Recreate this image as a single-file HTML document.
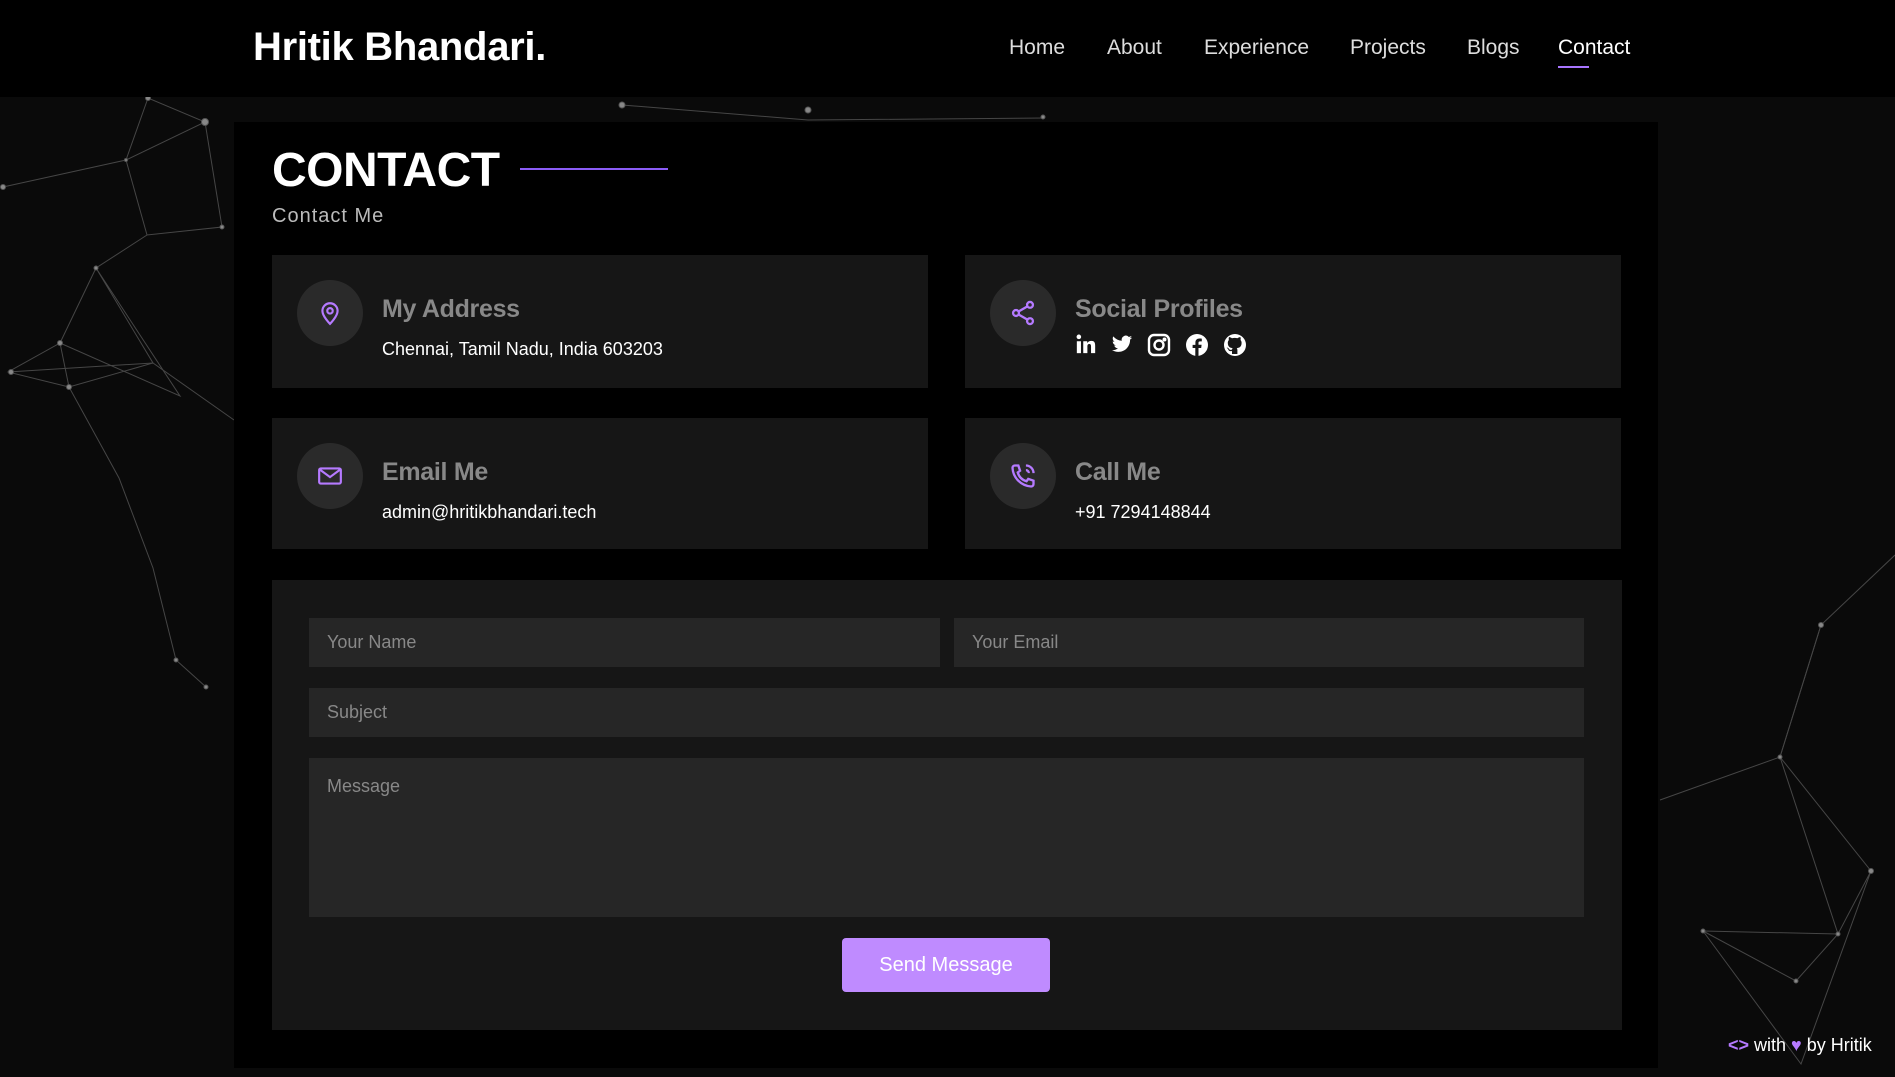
<!DOCTYPE html>
<html><head><meta charset="utf-8"><style>
*{box-sizing:border-box;margin:0;padding:0}
body{width:1895px;height:1077px;background:#0a0a0a;font-family:"Liberation Sans",sans-serif;position:relative;overflow:hidden;color:#fff}
svg.bg{position:absolute;left:0;top:0}
header{position:absolute;left:0;top:0;width:1895px;height:97px;background:#000}
.logo{position:absolute;left:253px;top:25px;font-size:40px;font-weight:bold;letter-spacing:-0.3px}
nav{position:absolute;top:36px;left:1009px;font-size:21px;color:#ddd}
nav span{position:absolute;white-space:nowrap}
.main{position:absolute;left:234px;top:122px;width:1424px;height:946px;background:#000}
h1{position:absolute;left:272px;top:143px;font-size:48px;font-weight:900;letter-spacing:-0.5px}
.hl{position:absolute;left:520px;top:168px;width:148px;height:2px;background:#8b5cf6}
.sub{position:absolute;left:272px;top:205px;font-size:20px;color:#bbb;letter-spacing:1px}
.card{position:absolute;background:#161616;width:656px}
.ic{position:absolute;left:25px;top:25px;width:66px;height:66px;border-radius:50%;background:#2a2a2a;display:flex;align-items:center;justify-content:center}
.t{position:absolute;left:110px;top:40px;font-size:25px;font-weight:bold;color:#888;letter-spacing:-0.3px}
.d{position:absolute;left:110px;top:84px;font-size:18px;color:#fff}
.form{position:absolute;left:272px;top:580px;width:1350px;height:450px;background:#161616}
.in{position:absolute;background:#262626;color:#888;font-size:18px;padding-left:18px;display:flex;align-items:center}
.btn{position:absolute;left:842px;top:938px;width:208px;height:54px;background:#bf8bff;border-radius:4px;color:#fff;font-size:20px;display:flex;align-items:center;justify-content:center}
.foot{position:absolute;left:1728px;top:1035px;font-size:18px;color:#fff}
</style></head><body>
<svg class="bg" width="1895" height="1077" stroke="#555" stroke-width="1" fill="#888">
<g opacity="0.8">
<polyline fill="none" points="3,187 126,160 205,122 148,98 126,160 147,235 222,227 205,122"/>
<polyline fill="none" points="147,235 96,268 60,343 8,372 69,387 153,363 96,268 180,396 60,343 69,387 119,478 153,568 176,660 206,687"/>
<polyline fill="none" points="8,372 153,363 234,420"/>
<polyline fill="none" points="1821,625 1780,757 1871,871 1801,1064 1703,931 1796,981 1838,934 1871,871"/>
<polyline fill="none" points="1895,555 1821,625 1780,757 1660,800"/>
<polyline fill="none" points="1703,931 1838,934 1780,757"/>
<polyline fill="none" points="622,105 808,120 1045,118"/>
</g>
<circle cx="148" cy="98" r="2.5"/><circle cx="205" cy="122" r="3.5"/><circle cx="3" cy="187" r="2.5"/><circle cx="126" cy="160" r="1.5"/><circle cx="222" cy="227" r="2"/><circle cx="96" cy="268" r="2"/><circle cx="60" cy="343" r="2.5"/><circle cx="11" cy="372" r="2.5"/><circle cx="69" cy="387" r="2.5"/><circle cx="206" cy="687" r="2"/><circle cx="176" cy="660" r="2"/>
<circle cx="1821" cy="625" r="2.5"/><circle cx="1780" cy="757" r="2"/><circle cx="1871" cy="871" r="2.5"/><circle cx="1703" cy="931" r="2"/><circle cx="1796" cy="981" r="2"/><circle cx="1838" cy="934" r="2"/><circle cx="622" cy="105" r="3"/><circle cx="808" cy="110" r="3"/><circle cx="1043" cy="117" r="2"/>
</svg>
<header>
<div class="logo">Hritik Bhandari.</div>
<nav>
<span style="left:0">Home</span><span style="left:98px">About</span><span style="left:195px">Experience</span><span style="left:341px">Projects</span><span style="left:458px">Blogs</span><span style="left:549px;color:#fff">Contact</span>
<span style="left:549px;top:30px;width:31px;height:2px;background:#a875ff"></span>
</nav>
</header>
<div class="main"></div>
<h1>CONTACT</h1><div class="hl"></div>
<div class="sub">Contact Me</div>

<div class="card" style="left:272px;top:255px;height:133px">
<div class="ic"><svg width="26" height="26" viewBox="0 0 24 24" fill="none" stroke="#b57aff" stroke-width="2"><path d="M12 22s7-7 7-12a7 7 0 0 0-14 0c0 5 7 12 7 12z"/><circle cx="12" cy="10" r="2.5"/></svg></div>
<div class="t">My Address</div><div class="d">Chennai, Tamil Nadu, India 603203</div></div>

<div class="card" style="left:965px;top:255px;height:133px">
<div class="ic"><svg width="28" height="28" viewBox="0 0 24 24" fill="none" stroke="#b57aff" stroke-width="2"><circle cx="18" cy="5" r="2.5"/><circle cx="6" cy="12" r="2.5"/><circle cx="18" cy="19" r="2.5"/><path d="M8.2 13.3l7.6 4.4M15.8 6.3l-7.6 4.4"/></svg></div>
<div class="t">Social Profiles</div>
<div style="position:absolute;left:110px;top:78px;display:flex;gap:14px">
<svg width="22" height="22" viewBox="0 0 24 24" fill="#fff"><rect x="2" y="9" width="4.5" height="13"/><circle cx="4.2" cy="4.2" r="2.5"/><path d="M9 9h4.3v2c.8-1.4 2.4-2.4 4.6-2.4 3.6 0 4.1 2.6 4.1 5.5V22h-4.5v-7c0-1.6-.1-3-1.9-3s-2.1 1.3-2.1 3v7H9z"/></svg>
<svg width="22" height="22" viewBox="0 0 24 24" fill="#fff"><path d="M23 5c-.8.4-1.700.6-2.6.7.9-.6 1.6-1.4 2-2.5-.9.5-1.900.9-2.900 1.1A4.5 4.5 0 0 0 11.8 8.4 12.8 12.8 0 0 1 2.5 3.7a4.5 4.5 0 0 0 1.4 6c-.7 0-1.4-.2-2-.6 0 2.2 1.6 4 3.6 4.4-.7.2-1.4.2-2 .1.6 1.8 2.2 3.1 4.2 3.1A9 9 0 0 1 1 18.600 12.8 12.8 0 0 0 8 20.6c8.3 0 12.8-6.9 12.8-12.8v-.6c.9-.6 1.6-1.4 2.2-2.2z"/></svg>
<svg width="24" height="24" viewBox="0 0 24 24" fill="none" stroke="#fff" stroke-width="2.4"><rect x="2" y="2" width="20" height="20" rx="5"/><circle cx="12" cy="12" r="4.5"/><circle cx="17.5" cy="6.5" r=".8" fill="#fff"/></svg>
<svg width="24" height="24" viewBox="0 0 24 24"><circle cx="12" cy="12" r="11" fill="#fff"/><path d="M13.5 23v-8h2.7l.4-3.2h-3.1V9.9c0-.9.3-1.5 1.6-1.5h1.7V5.6c-.3 0-1.3-.1-2.4-.1-2.4 0-4 1.5-4 4.1v2.3H7.6V15h2.7v8z" fill="#161616"/></svg>
<svg width="24" height="24" viewBox="0 0 24 24"><circle cx="12" cy="12" r="11" fill="#fff"/><path d="M9 21v-3c-3 .6-3.6-1.3-3.6-1.3-.5-1.2-1.2-1.5-1.2-1.5-1-.6.1-.6.1-.6 1 .1 1.6 1.1 1.6 1.1.9 1.6 2.5 1.2 3.1.9.1-.7.4-1.2.7-1.4-2.4-.3-4.9-1.2-4.9-5.3 0-1.2.4-2.1 1.1-2.900-.1-.3-.5-1.4.1-2.900 0 0 .9-.3 3 1.100a10 10 0 0 1 5.4 0c2.100-1.400 3-1.100 3-1.100.6 1.500.2 2.600.1 2.900.7.8 1.100 1.700 1.100 2.900 0 4.100-2.500 5-4.900 5.300.4.3.7 1 .7 2V21z" fill="#161616"/></svg>
</div></div>

<div class="card" style="left:272px;top:418px;height:131px">
<div class="ic"><svg width="26" height="26" viewBox="0 0 24 24" fill="none" stroke="#b57aff" stroke-width="2"><rect x="2" y="5" width="20" height="14" rx="1.5"/><path d="M2.5 6l9.5 7 9.5-7"/></svg></div>
<div class="t">Email Me</div><div class="d">admin@hritikbhandari.tech</div></div>

<div class="card" style="left:965px;top:418px;height:131px">
<div class="ic"><svg width="28" height="28" viewBox="0 0 24 24" fill="none" stroke="#b57aff" stroke-width="2"><path d="M5 3h3l1.5 4.5-2 1.5a11 11 0 0 0 7.5 7.5l1.5-2L21 16v3a2 2 0 0 1-2 2A17 17 0 0 1 3 5a2 2 0 0 1 2-2z"/><path d="M14.5 3a6.5 6.5 0 0 1 6.5 6.5M14.5 7a2.5 2.5 0 0 1 2.5 2.5"/></svg></div>
<div class="t">Call Me</div><div class="d">+91 7294148844</div></div>

<div class="form"></div>
<div class="in" style="left:309px;top:618px;width:631px;height:49px">Your Name</div>
<div class="in" style="left:954px;top:618px;width:630px;height:49px">Your Email</div>
<div class="in" style="left:309px;top:688px;width:1275px;height:49px">Subject</div>
<div class="in" style="left:309px;top:758px;width:1275px;height:159px;align-items:flex-start;padding-top:18px">Message</div>
<div class="btn">Send Message</div>
<div class="foot"><span style="color:#b57aff;font-weight:bold">&lt;&gt;</span> with <span style="color:#b57aff">♥</span> by Hritik</div>
</body></html>
